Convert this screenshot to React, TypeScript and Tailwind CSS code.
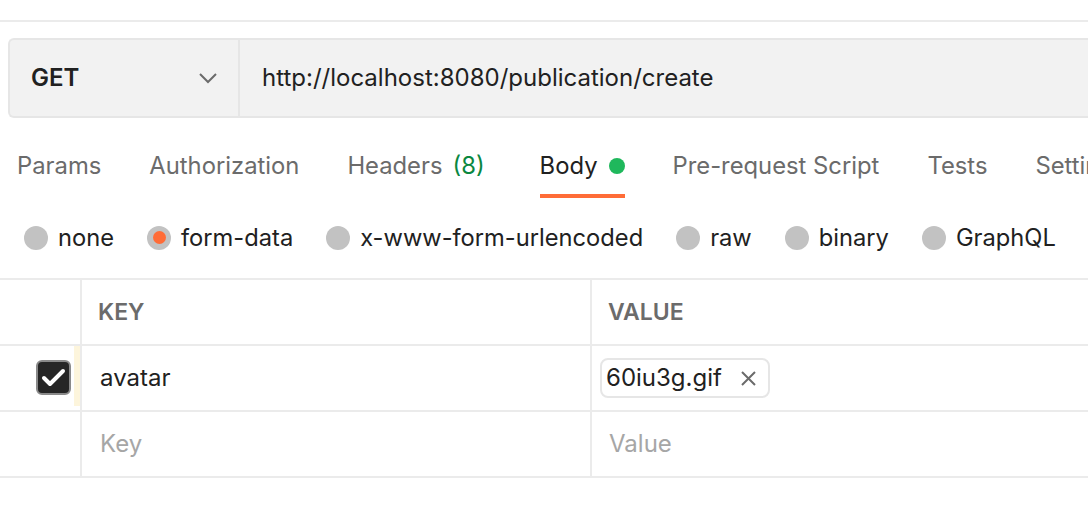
export default function App() {
  const tabs = [
    { label: "Params" },
    { label: "Authorization" },
    { label: "Headers", count: "(8)" },
    { label: "Body", active: true },
    { label: "Pre-request Script" },
    { label: "Tests" },
    { label: "Settings" },
  ];
  const radios = [
    { label: "none" },
    { label: "form-data", selected: true },
    { label: "x-www-form-urlencoded" },
    { label: "raw" },
    { label: "binary" },
    { label: "GraphQL" },
  ];
  return (
    <div className="w-[1088px] h-[518px] overflow-hidden bg-white font-['Inter',sans-serif] text-[#212121]">
      <div className="h-[20px]" />
      <div className="h-[2px] bg-[#ebebeb]" />
      <div className="pl-[8px] pt-[16px]">
        <div className="flex h-[80px] rounded-l-[6px] border-2 border-r-0 border-[#e6e6e6] bg-[#f2f2f2]">
          <div className="w-[230px] shrink-0 flex items-center justify-between pl-[21px] pr-[21px] border-r-2 border-[#e6e6e6]">
            <span className="text-[24px] font-semibold leading-none">GET</span>
            <svg width="18" height="11" viewBox="0 0 18 11" fill="none">
              <path d="M1 1 L9 9 L17 1" stroke="#6b6b6b" strokeWidth="2" />
            </svg>
          </div>
          <div className="flex items-center pl-[22px] text-[24px] whitespace-nowrap">
            http://localhost:8080/publication/create
          </div>
        </div>
      </div>
      <div className="flex pt-[33px] pl-[17px] gap-[48px] whitespace-nowrap">
        {tabs.map((t) => (
          <div key={t.label} className="flex flex-col shrink-0">
            <div className={`h-[30px] flex items-center text-[23.8px] ${t.active ? "text-[#212121]" : "text-[#6b6b6b]"}`}>
              {t.label}
              {t.count && <span className="ml-[10px] mr-[7px] text-[#0a873f]">{t.count}</span>}
              {t.active && <span className="ml-[11px] w-[16px] h-[16px] rounded-full bg-[#1fb85c]" />}
            </div>
            <div className={`mt-[13px] h-[4px] ${t.active ? "bg-[#ff6c37]" : "bg-transparent"}`} />
          </div>
        ))}
      </div>
      <div className="flex h-[80px] items-center pl-[24px] gap-[33px] whitespace-nowrap">
        {radios.map((r) => (
          <div key={r.label} className="flex items-center gap-[10px] text-[23.7px]">
            {r.selected ? (
              <span className="w-[24px] h-[24px] rounded-full bg-[#c2c2c2] flex items-center justify-center">
                <span className="w-[13px] h-[13px] rounded-full bg-[#ff6c37]" />
              </span>
            ) : (
              <span className="w-[24px] h-[24px] rounded-full bg-[#c2c2c2]" />
            )}
            <span>{r.label}</span>
          </div>
        ))}
      </div>
      <div className="border-t-2 border-[#ebebeb]">
        <div className="grid grid-cols-[82px_510px_1fr] h-[66px] border-b-2 border-[#ebebeb]">
          <div className="border-r-2 border-[#ebebeb]" />
          <div className="border-r-2 border-[#ebebeb] flex items-center pl-[16px] text-[23px] font-semibold text-[#6b6b6b]">KEY</div>
          <div className="flex items-center pl-[16px] text-[23px] font-semibold text-[#6b6b6b]">VALUE</div>
        </div>
        <div className="grid grid-cols-[82px_510px_1fr] h-[66px] border-b-2 border-[#ebebeb]">
          <div className="border-r-2 border-[#ebebeb] flex justify-end items-start">
            <div className="mt-[14px] w-[35px] h-[35px] rounded-[6px] border-2 border-[#8a8a8a] bg-[#262626] flex items-center justify-center">
              <svg width="31" height="31" viewBox="0 0 31 31" fill="none">
                <path d="M6 16 L12 22 L25 9" stroke="white" strokeWidth="4" strokeLinecap="round" strokeLinejoin="round" />
              </svg>
            </div>
            <div className="ml-[3px] w-[6px] h-[60px] bg-[#fdf5dc]" />
          </div>
          <div className="border-r-2 border-[#ebebeb] flex items-center pl-[18px] text-[24px]">avatar</div>
          <div className="flex items-center pl-[8px]">
            <div className="h-[40px] flex items-center border-2 border-[#e6e6e6] rounded-[8px] pl-[4px] pr-[11px] text-[24px]">
              <span>60iu3g.gif</span>
              <svg className="ml-[18px]" width="17" height="17" viewBox="0 0 17 17" fill="none">
                <path d="M2 2 L15 15 M15 2 L2 15" stroke="#6b6b6b" strokeWidth="2" />
              </svg>
            </div>
          </div>
        </div>
        <div className="grid grid-cols-[82px_510px_1fr] h-[66px] border-b-2 border-[#ebebeb]">
          <div className="border-r-2 border-[#ebebeb]" />
          <div className="border-r-2 border-[#ebebeb] flex items-center pl-[18px] text-[24px] text-[#a6a6a6]">Key</div>
          <div className="flex items-center pl-[17px] text-[24px] text-[#a6a6a6]">Value</div>
        </div>
      </div>
    </div>
  );
}
